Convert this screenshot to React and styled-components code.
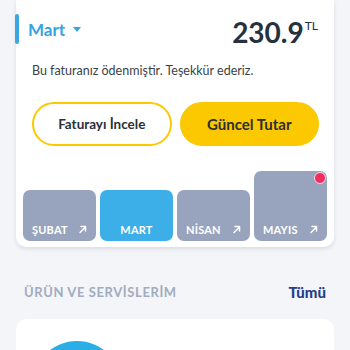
import React from "react";
import styled, { createGlobalStyle } from "styled-components";

const Global = createGlobalStyle`
  html, body { margin: 0; padding: 0; background: #f3f5f8; }
  body { width: 350px; height: 350px; overflow: hidden; font-family: Lato, "Noto Sans", sans-serif; }
  * { box-sizing: border-box; }
`;

const Page = styled.div`
  display: flex;
  flex-direction: column;
  padding: 0 16px;
`;

const Card = styled.div`
  background: #fff;
  border-radius: 0 0 10px 10px;
  box-shadow: 0 2px 4px rgba(40, 50, 80, 0.12);
  display: flex;
  flex-direction: column;
`;

const Header = styled.div`
  display: flex;
  align-items: center;
  height: 30px;
  margin-top: 14px;
  padding-right: 16px;
`;

const Bar = styled.div`
  width: 4px;
  height: 30px;
  border-radius: 2px;
  background: #3aa7e2;
  margin-left: -1px;
`;

const MonthSelect = styled.div`
  display: flex;
  align-items: center;
  margin-left: 9px;
  color: #35a4e0;
  font-size: 17px;
  font-weight: 700;
  gap: 8px;
`;

const Caret = styled.span`
  width: 0;
  height: 0;
  border-left: 4.5px solid transparent;
  border-right: 4.5px solid transparent;
  border-top: 5px solid #35a4e0;
  margin-top: 1px;
`;

const Amount = styled.div`
  margin-left: auto;
  display: flex;
  align-items: flex-start;
  color: #26303f;
  font-weight: 700;
  font-size: 28px;
  line-height: 28px;
  margin-top: 6px;
`;

const Currency = styled.span`
  font-size: 12px;
  line-height: 12px;
  font-weight: 400;
  margin-left: 1px;
  margin-top: 2px;
`;

const Body = styled.div`
  display: flex;
  flex-direction: column;
  align-items: stretch;
  padding: 19px 15px 0 16px;
`;

const Info = styled.div`
  font-size: 12.5px;
  line-height: 16px;
  color: #3b3f47;
  text-align: left;
`;

const Buttons = styled.div`
  display: grid;
  grid-template-columns: 1fr 1fr;
  gap: 8px;
  margin-top: 23px;
`;

const PillButton = styled.button`
  height: 44px;
  border-radius: 22px;
  border: 2px solid #fcc800;
  background: ${(p) => (p.$primary ? "#fcc800" : "#fff")};
  color: #2b2f36;
  font-family: Lato, "Noto Sans", sans-serif;
  font-weight: 700;
  font-size: ${(p) => (p.$primary ? "15px" : "13.5px")};
  padding: 0;
`;

const Tiles = styled.div`
  display: grid;
  grid-template-columns: repeat(4, 73px);
  gap: 4px;
  align-items: end;
  margin-top: 25px;
  padding: 0 0 6px 7px;
`;

const Tile = styled.div`
  position: relative;
  height: ${(p) => (p.$tall ? "70px" : "51px")};
  border-radius: 7px;
  background: ${(p) => (p.$active ? "#3caee8" : "#98a4bd")};
  display: flex;
  align-items: flex-end;
  justify-content: ${(p) => (p.$active ? "center" : "space-between")};
  padding: 0 9px 5px 9px;
  color: #fff;
`;

const TileLabel = styled.span`
  font-size: 11px;
  font-weight: 700;
  line-height: 13px;
  letter-spacing: 0.2px;
`;

const Dot = styled.span`
  position: absolute;
  top: 1px;
  right: 1px;
  width: 12px;
  height: 12px;
  border-radius: 50%;
  background: #ef2d5e;
  border: 1.5px solid #ffd6e0;
`;

const Arrow = () => (
  <svg width="9" height="9" viewBox="0 0 9 9" style={{ marginBottom: 2 }}>
    <path d="M2 7.5L7.5 2M3 1.5H7.5V6" stroke="#fff" strokeWidth="1.5" fill="none" strokeLinecap="round" strokeLinejoin="round" />
  </svg>
);

const SectionHead = styled.div`
  display: flex;
  justify-content: space-between;
  align-items: center;
  margin-top: 36px;
  padding: 0 8px;
  line-height: 18px;
`;

const SectionTitle = styled.span`
  font-size: 13px;
  font-weight: 700;
  letter-spacing: 0.6px;
  color: #a2acbf;
`;

const SeeAll = styled.span`
  font-size: 15px;
  font-weight: 900;
  color: #233f8c;
`;

const ServiceCard = styled.div`
  margin-top: 18px;
  background: #fff;
  border-radius: 10px;
  height: 120px;
  padding: 22px 0 0 16px;
`;

const Circle = styled.div`
  width: 90px;
  height: 90px;
  border-radius: 50%;
  background: #2aaee8;
`;

const months = [
  { label: "ŞUBAT" },
  { label: "MART", active: true },
  { label: "NİSAN" },
  { label: "MAYIS", tall: true, dot: true },
];

export default function App() {
  return (
    <>
      <Global />
      <Page>
        <Card>
          <Header>
            <Bar />
            <MonthSelect>
              Mart <Caret />
            </MonthSelect>
            <Amount>
              230.9<Currency>TL</Currency>
            </Amount>
          </Header>
          <Body>
            <Info>Bu faturanız ödenmiştir. Teşekkür ederiz.</Info>
            <Buttons>
              <PillButton>Faturayı İncele</PillButton>
              <PillButton $primary>Güncel Tutar</PillButton>
            </Buttons>
          </Body>
          <Tiles>
            {months.map((m) => (
              <Tile key={m.label} $active={m.active} $tall={m.tall}>
                <TileLabel>{m.label}</TileLabel>
                {!m.active && <Arrow />}
                {m.dot && <Dot />}
              </Tile>
            ))}
          </Tiles>
        </Card>
        <SectionHead>
          <SectionTitle>ÜRÜN VE SERVİSLERİM</SectionTitle>
          <SeeAll>Tümü</SeeAll>
        </SectionHead>
        <ServiceCard>
          <Circle />
        </ServiceCard>
      </Page>
    </>
  );
}
